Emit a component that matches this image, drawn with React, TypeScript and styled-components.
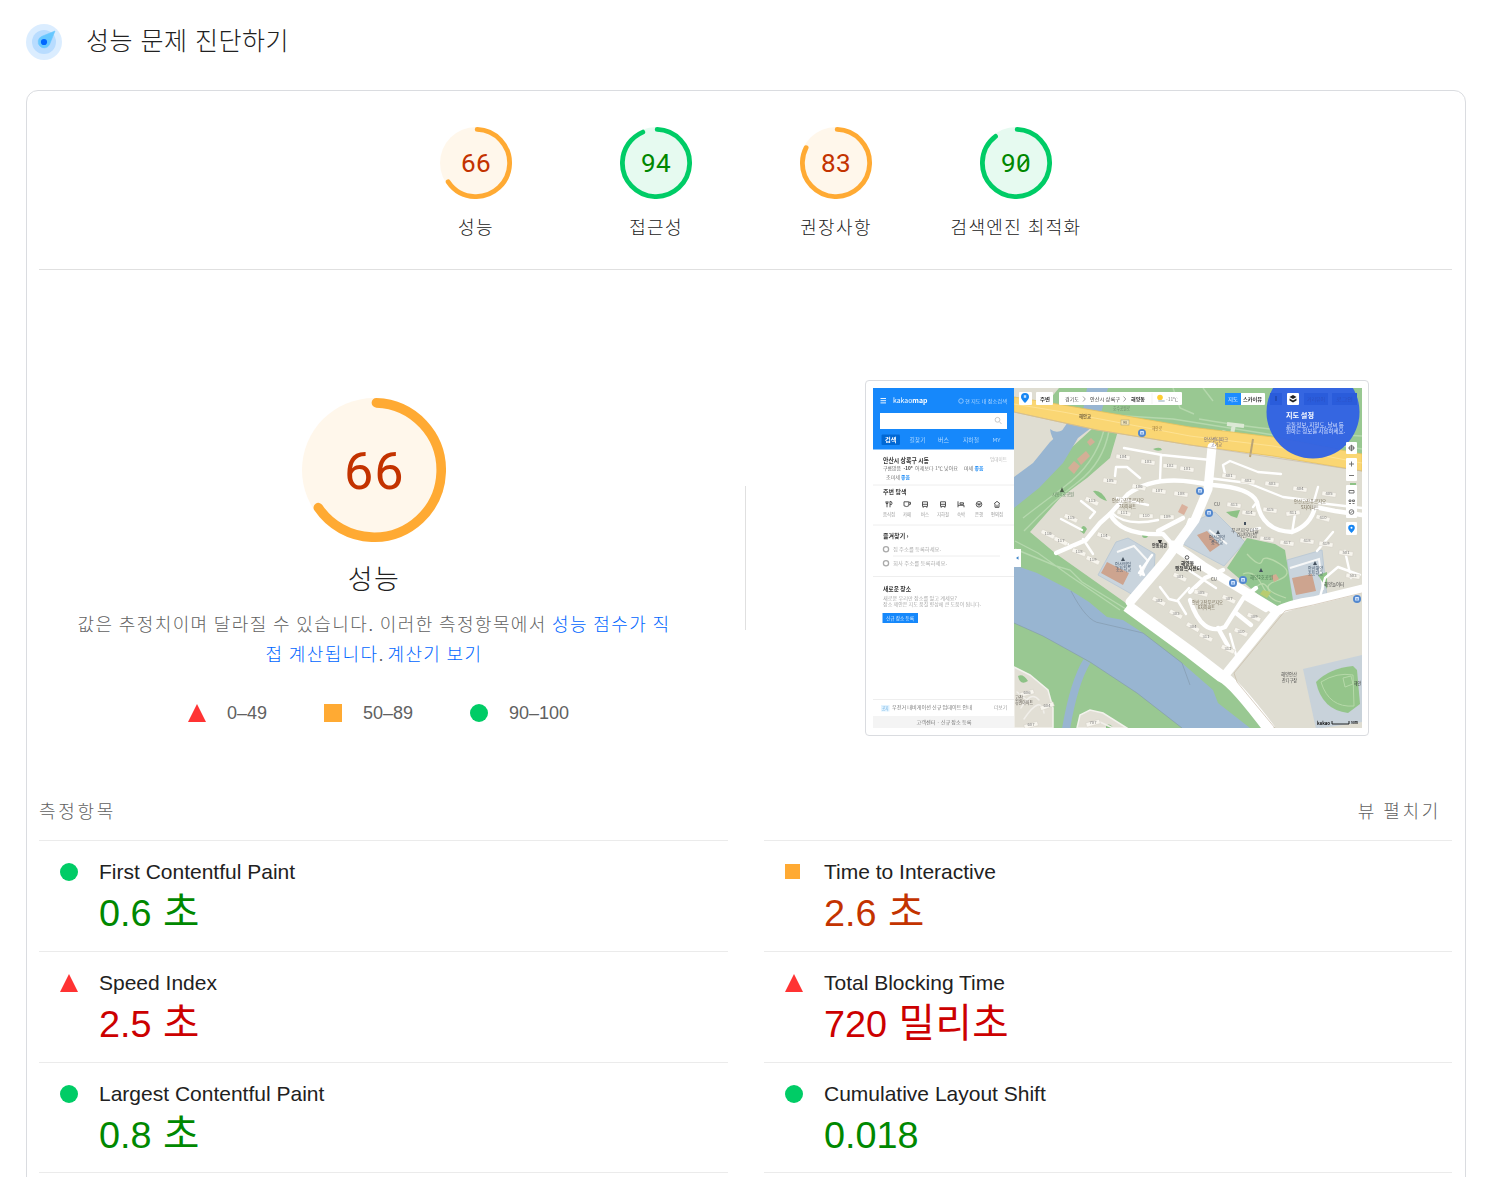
import React from "react";
import styled, { createGlobalStyle } from "styled-components";

const sans = `"Liberation Sans", "Noto Sans CJK KR", sans-serif`;

const GlobalStyle = createGlobalStyle`
  * { box-sizing: border-box; }
  html, body { margin: 0; background: #fff; }
  body { font-family: ${sans}; font-weight: 300; color: #212121; overflow: hidden; }
`;

type Level = "pass" | "average" | "fail";
const ink: Record<Level, string> = { pass: "#008800", average: "#c33300", fail: "#cc0000" };
const fillColor: Record<Level, string> = { pass: "#00cc66", average: "#ffaa33", fail: "#ff3333" };
const tint: Record<Level, string> = { pass: "#e6faf0", average: "#fff7eb", fail: "#ffebeb" };

const Page = styled.div`
  height: 1177px;
  padding: 0 21px 0 26px;
  overflow: hidden;
  display: flex;
  flex-direction: column;
`;
const Header = styled.header`
  height: 90px;
  flex: none;
  display: flex;
  align-items: flex-start;
  gap: 24px;
  padding-top: 24px;
`;
const Title = styled.h1`
  margin: 0;
  font-size: 25px;
  font-weight: 300;
  line-height: 34px;
  letter-spacing: 0.5px;
`;
const Card = styled.main`
  width: 1440px;
  height: 1200px;
  flex: none;
  border: 1px solid #dadce0;
  border-radius: 12px;
  padding: 0 13px 0 12px;
`;
const ScoreRow = styled.section`
  height: 179px;
  display: flex;
  justify-content: center;
  padding-top: 36px;
  border-bottom: 1px solid #e0e0e0;
`;
const GaugeItem = styled.div`
  width: 180px;
  display: flex;
  flex-direction: column;
  align-items: center;
`;
const GaugeFrame = styled.div<{ $size: number }>`
  width: ${(p) => p.$size}px;
  height: ${(p) => p.$size}px;
  svg { display: block; width: 100%; height: 100%; }
`;
const GaugeLabel = styled.div`
  margin-top: 16px;
  font-size: 18px;
  line-height: 26px;
  letter-spacing: 1.35px;
  word-spacing: -0.8px;
  padding-left: 1px;
  white-space: nowrap;
`;
const Overview = styled.section`
  height: 516px;
  display: grid;
  grid-template-columns: 670px 1px 670px;
  justify-content: space-between;
`;
const Summary = styled.div`
  display: flex;
  flex-direction: column;
  align-items: center;
  padding-top: 128px;
`;
const SummaryTitle = styled.h2`
  margin: 20px 0 0;
  font-size: 27px;
  font-weight: 300;
  line-height: 36px;
  letter-spacing: 1.5px;
`;
const Description = styled.p`
  margin: 12px 0 0;
  font-size: 18px;
  line-height: 30px;
  letter-spacing: 1.4px;
  word-spacing: -1.1px;
  color: #616161;
  text-align: center;
  white-space: nowrap;
`;
const Stop = styled.span`
  letter-spacing: 0;
`;
const Link = styled.a`
  color: #0066ff;
  text-decoration: none;
`;
const Legend = styled.div`
  display: flex;
  gap: 57px;
  margin: 28px 0 0 9px;
`;
const LegendItem = styled.span`
  display: flex;
  align-items: center;
  gap: 21px;
  font-size: 18px;
  line-height: 30px;
  color: #616161;
`;
const Divider = styled.div`
  height: 144px;
  margin-top: 216px;
  background: #e0e0e0;
`;
const Preview = styled.div`
  display: flex;
  justify-content: center;
  align-items: flex-start;
  padding-top: 110px;
`;
const ShotFrame = styled.div`
  width: 504px;
  height: 356px;
  border: 1px solid #dadce0;
  border-radius: 4px;
  padding: 7px;
  svg { display: block; }
`;
const MetricsHeader = styled.div`
  height: 54px;
  padding: 11px 11px 0 0;
  display: flex;
  justify-content: space-between;
  font-size: 18px;
  line-height: 30px;
  letter-spacing: 2.7px;
  word-spacing: -1.5px;
  color: #616161;
`;
const MetricsGrid = styled.section`
  display: grid;
  grid-template-columns: 689px 688px;
  justify-content: space-between;
  grid-auto-rows: 111px;
`;
const Metric = styled.article<{ $last: boolean }>`
  display: flex;
  border-top: 1px solid #ebebeb;
  border-bottom: ${(p) => (p.$last ? "1px solid #ebebeb" : "none")};
`;
const MetricIcon = styled.div`
  width: 60px;
  padding: 22px 0 0 21px;
`;
const MetricBody = styled.div`
  padding-top: 16px;
`;
const MetricName = styled.div`
  font-size: 21px;
  line-height: 30px;
`;
const MetricValue = styled.div<{ $level: Level }>`
  font-size: 37.8px;
  font-weight: 400;
  line-height: 52px;
  color: ${(p) => ink[p.$level]};
`;
const Unit = styled.span`
  font-size: 39.5px;
  line-height: 1;
  letter-spacing: 0.5px;
`;
const ShapeSvg = styled.svg`
  display: block;
  flex: none;
`;

const Shape = ({ level, small }: { level: Level; small?: boolean }) => (
  <ShapeSvg width="18" height="18" viewBox="0 0 18 18" fill={fillColor[level]}>
    {level === "fail" && <path d="M9 0 18 18H0Z" />}
    {level === "average" && (small ? <rect y="1" width="15" height="15" /> : <rect width="18" height="18" />)}
    {level === "pass" && <circle cx="9" cy="9" r="9" />}
  </ShapeSvg>
);

const Gauge = ({ score, size }: { score: number; size: number }) => {
  const level: Level = score >= 90 ? "pass" : "average";
  const around = 2 * Math.PI * 56;
  return (
    <GaugeFrame $size={size}>
      <svg viewBox="0 0 120 120">
        <circle cx="60" cy="60" r="60" fill={tint[level]} />
        <circle
          cx="60" cy="60" r="56" fill="none" stroke={fillColor[level]} strokeWidth="8" strokeLinecap="round"
          strokeDasharray={`${(score / 100) * around - 4} ${around}`} transform="rotate(-87.95 60 60)"
        />
        <text x="60.2" y="75.8" textAnchor="middle" fontFamily="Roboto, sans-serif" fontWeight="400" fontSize="43.5" letterSpacing="0.8" fill={ink[level]}>
          {score}
        </text>
        {score % 10 === 0 && <path d="M66.500 67.500 78.500 53.500" stroke={ink[level]} strokeWidth="3.2" />}
      </svg>
    </GaugeFrame>
  );
};

const Compass = () => (
  <ShapeSvg width="36" height="36" viewBox="0 0 36 36">
    <circle cx="18" cy="18" r="18" fill="#dbedff" />
    <circle cx="18" cy="18" r="12" fill="#b8dcff" />
    <path d="M29 7 15.500 12.500a6 6 0 1 0 7.900 8.300Z" fill="#66c7ff" stroke="#66c7ff" strokeWidth=".6" strokeLinejoin="round" />
    <circle cx="18" cy="18" r="3.1" fill="#0066ff" />
  </ShapeSvg>
);

interface LabelProps {
  x: number; y: number; w: number; s?: number; c?: string; b?: boolean; children: string;
}
const Label = ({ x, y, w, s = 5, c = "#777", b, children }: LabelProps) => (
  <text x={x} y={y + s * 0.36} fontSize={s} fill={c} fontWeight={b ? 700 : 400} textLength={w} lengthAdjust="spacingAndGlyphs">
    {children}
  </text>
);

const blocks: [number, number, number, string][] = [
  [250, 69, 8, "104"], [275, 74, 8, "103"], [297, 78, 5, "102"], [314, 81, 8, "101"], [237, 93, 10, "105"],
  [266, 99, 14, "106"], [286, 103, 8, "107"], [308, 106, 8, "108"], [219, 113, 25, "113"], [251, 125, 12, "111"],
  [273, 128, 0, "110"], [294, 129, 0, "109"], [198, 130, 25, "115"], [175, 146, 25, "116"], [188, 153, 25, "117"],
  [231, 148, 20, "114"], [206, 164, 20, "118"], [220, 172, 25, "119"], [356, 88, 8, "401"], [375, 93, 8, "402"],
  [399, 96, 8, "403"], [427, 101, 8, "404"], [456, 106, 8, "405"], [361, 117, 8, "413"], [376, 125, 8, "414"],
  [397, 122, 8, "415"], [420, 125, -8, "411"], [450, 130, 15, "410"], [394, 151, 8, "416"], [414, 155, 8, "417"],
  [434, 153, 8, "418"], [453, 156, 8, "419"], [307, 189, 25, "301"], [286, 213, 28, "302"], [303, 226, 28, "303"],
  [328, 205, 15, "305"], [356, 211, 25, "307"], [381, 229, 25, "309"], [368, 244, 25, "310"], [333, 249, 25, "311"],
  [355, 261, 25, "312"], [320, 239, 30, "304"], [473, 165, 8, "501"], [480, 188, 8, "503"],
  [154, 305, -15, "606"], [174, 318, -20, "604"], [158, 337, -15, "607"], [220, 335, -15, "707"],
];

const busStops: [number, number][] = [
  [269, 45], [327, 103], [336, 125], [360, 195], [370, 192], [484, 211],
];

const nearby: [number, string][] = [
  [16, "음식점"], [34, "카페"], [52, "버스"], [70, "지하철"], [88, "숙박"], [106, "은행"], [124, "편의점"],
];

const NearbyIcon = ({ kind, x }: { kind: number; x: number }) => (
  <g transform={`translate(${x - 3} 113.3)`} fill="none" stroke="#444" strokeWidth=".9">
    {kind === 0 && <path d="M0 0v2q1 1 2 0V0M1 0v6M4 6V0q2 0 2 2t-2 1" />}
    {kind === 1 && <path d="M0 .5h4.800v4q-2 1.500-4.800 0ZM5 1h1.500v2H5" />}
    {(kind === 2 || kind === 3) && <path d="M.5.5h5v4.600h-5ZM.5 3h5M1.200 5.500v1M4.800 5.500v1" />}
    {kind === 4 && <path d="M0 0v6M0 4h6v2M2 3h3.500V1.500H2Z" />}
    {kind === 5 && <><circle cx="3" cy="3" r="2.8" /><path d="m1.300 2 1 2 .7-2 .7 2 1-2" /></>}
    {kind === 6 && <path d="M0 2.500 3 0l3 2.500M1 2.500V6h4V2.500M3 3.500V6" />}
  </g>
);

const MapArea = () => (
  <g>
    <rect x="141" width="348" height="340" fill="#dfddd2" />
    <path d="M168 14 185 0H489V72L317 42Z" fill="#99c892" />
    <path d="M141 0H186L172 17 141 12Z" fill="#dfddd2" />
    <path d="M209 28 214 0H235L226 32Z" fill="#98b5d1" />
    <path d="M247 36 237 70 214 90 187 110 157 144 182 165 250 213 317 266 360 296 397 340H141V98L198 60 220 40Z" fill="#99c892" />
    <path d="M197 31 223 36 205 50 190 75 166 100 141 120V89L160 75 177 54 188 44Z" fill="#98b5d1" />
    <path d="M177 41q6 5 13 1l-7 13q-5-6-6-14Z" fill="#98b5d1" />
    <path d="M141 177 164 185 197 202 216 214 234 229 250 232 270 245 309 275 340 302 345 315 377 340H309L264 305 217 274 170 248 141 235Z" fill="#98b5d1" />
    <path d="M214 273Q201 294 193 341" fill="none" stroke="#98b5d1" strokeWidth="8" />
    <path d="M141 235 170 248 217 274 264 305 309 340M198 203Q214 234 227 235L270 245 309 275 317 297" fill="none" stroke="#8297aa" strokeWidth=".6" />
    <path d="M141 279 157 287 175 302 180 320V340H141ZM204 340 207 327 217 322 230 325 254 340Z" fill="#e2dfd5" stroke="#f3f2ed" strokeWidth="1.5" />
    <g fill="none" stroke="#b5d8ad" strokeWidth="1.4">
      <path d="M236 43Q230 75 205 94T151 143M231 42Q222 76 191 99T150 130M142 161 183 178 197 182 209 194 253 221M142 153 165 165 197 188 247 222" />
      <path d="M237 27 300 31 489 61M300 0 307 20 321 26M330 0 340 13M326 31Q401 44 489 48" />
      <path d="M354 36 371 38M361 36 359 46M349 44 365 48" strokeWidth="4" stroke="#dce9d5" />
    </g>
    <path d="M141 9 190 17 317 39 400 49 489 66V83L400 68 317 57 224 42 141 24Z" fill="#fad673" stroke="#e9c15b" strokeWidth=".8" />
    <path d="M141 16 190 24 317 48 400 58 489 75" fill="none" stroke="#ffe6a0" strokeWidth=".7" />
    <path d="M380 51 377 69" stroke="#b9a477" strokeWidth="2" />

    <g fill="#d9ac97" opacity=".9">
      <path d="m204 71 9-8 4 5-9 9ZM214 54l4-4 4 4-5 4ZM195 80l6-7 6 5-6 8ZM305 124l4-8 6 3-4 8Z" />
    </g>
    <path d="M243 154 255 150 282 166 281 184 262 208 225 187ZM320 134 342 124 372 154 351 178 310 156ZM414 172 449 162 454 209 420 216Z" fill="#c9d4dd" stroke="#bccad5" strokeWidth="1" />
    <path d="m234 174 22 11-6 12-22-12ZM324 147l10-4 13 14-10 7ZM419 190l20-4 4 17-20 4Z" fill="#cda48f" />
    <path d="m244 164 17-6 14 15-8 15M336 142l18 14M417 180l29-9 4 31" fill="none" stroke="#f7f8f8" strokeWidth="2" />
    <path d="M354 180 374 150 402 156 412 162 421 219 404 223Z" fill="#94c690" />
    <path d="M374 166Q387 180 389 173T407 176 403 193 413 210M370 186Q381 181 389 197T408 214M381 202q10-14 16 3" fill="none" stroke="#b8d9ab" strokeWidth="1.3" />
    <path d="m398 188 5-2 3 5-5 3Z" fill="#d3ad93" />
    <path d="m390 202 8 2-4 6-7-4Z" fill="#b8cc70" />
    <g fill="#8dc286">
      <path d="M220 103q8-2 14 10-8-2-14-10ZM280 61q8-3 9 1-5 2-9-1ZM207 143q3-9 7-2l-3 5ZM269 147a3 3 0 1 0 6 0 3 3 0 1 0-6 0M353 124l14-2-3 8-6-2ZM145 288q5-3 10 5-8 5-10-5ZM233 337q5-2 7 3h-7ZM477 95h6v4h-6ZM445 187l9-3v17Z" />
    </g>

    <g fill="none" stroke="#fff" strokeLinecap="round" strokeLinejoin="round">
      <path d="M339 59 335 101 322 132 292 173 257 214" strokeWidth="9" />
      <path d="M254 218 317 264 348 288Q360 293 397 342" strokeWidth="12" strokeLinecap="butt" />
      <path d="M300 157 330 178 404 223Q418 216 440 213L489 201M404 223 352 287" strokeWidth="9" />
      <g strokeWidth="4.4">
        <path d="M183 165 213 152 227 135 237 126 255 106Q280 88 320 94L340 97Q378 100 384 114 389 143 419 144 438 137 442 119L462 123 489 127" />
        <path d="M237 126Q248 148 290 146L305 163M285 143 310 130M317 132 308 157" />
        <path d="M317 204 332 190 350 182M317 212Q329 249 352 239L371 209 383 200M371 209 393 222M345 240 355 258M363 225 378 237" />
      </g>
      <g strokeWidth="2.4">
        <path d="M251 60 289 67 338 72M288 67 287 92M242 88 243 79 254 79 267 90M208 113 222 124 217 130M188 131 209 142M169 144 195 156M210 151 220 166M244 110 275 117M238 124Q252 139 285 132" />
        <path d="M352 86 350 77 357 73 385 84 408 86M335 90 375 95 410 109 441 113 445 99M446 115 489 120M380 119 384 114M419 145 422 126M387 140 378 142M472 163 478 190M444 163 460 144M447 209 452 190 465 179 487 187" />
        <path d="M287 199 296 211 304 213M304 213 316 200M305 213 313 226M267 178 271 187 266 185 279 167M317 183 343 200M357 246 363 267" />
      </g>
      <path d="M148 320q10-18 18-8M151 331q17-25 20-6M144 304l12 10M214 338l13-4 13 6" stroke="#f1efea" strokeWidth="1.5" />
    </g>
    <path d="M489 205 440 217 412 223 361 285 364 294 402 340M141 24 224 42 317 57 489 83" fill="none" stroke="#c9bca9" strokeWidth=".7" />

    <path d="M430 281 489 267V334L443 341Z" fill="#c8d2da" />
    <path d="M443 294Q457 280 480 278L484 282 487 316 475 325Q449 322 443 294Z" fill="#94c58a" />
    <path d="M448 294Q464 284 480 287L481 318Q456 320 448 294ZM470 290l8-2 2 8-8 3Z" fill="none" stroke="#b6d9a9" strokeWidth="1" />

    {blocks.map(([x, y, turn, name], i) => (
      <g key={i} transform={`translate(${x} ${y}) rotate(${turn})`}>
        <rect x="-7" y="-2" width="14" height="4.4" fill="#f7f5ee" stroke="#cfcbc0" strokeWidth=".4" />
        <text x="0" y="1.2" fontSize="4.2" textAnchor="middle" fill="#777" transform={`rotate(${-turn})`}>{name}</text>
      </g>
    ))}

    <Label x={206} y={28} w={12} s={4.5} c="#74623c" b>해안교</Label>
    <rect x="248" y="32" width="8" height="5" fill="#f4e6b5" stroke="#a7a389" strokeWidth=".6" />
    <Label x={250} y={34.7} w={4} s={4} c="#555">98</Label>
    <Label x={279} y={40.5} w={10} s={4.5} c="#9c7a3c">해안로</Label>
    <Label x={240} y={20} w={17} s={4.5} c="#6a8668">호수공원로</Label>
    <path d="m189 99-2 5h4Z" fill="#4d5e4c" />
    <Label x={179} y={106} w={22} s={5} c="#668365">시동1호공원</Label>
    <Label x={239} y={112} w={32} s={5} c="#756b56">안산고잔푸르지오</Label>
    <Label x={246} y={118} w={17} s={5} c="#756b56">7차아파트</Label>
    <Label x={331} y={51} w={24} s={4.8} c="#635c7e">안산센터파크</Label>
    <Label x={338} y={56} w={11} s={4.8} c="#635c7e">고가교</Label>
    <Label x={279} y={157} w={15} s={5} c="#333" b>안동회관</Label>
    <path d="M285 152h4l-1 3h-2Z" fill="#333" />
    <Label x={341} y={116} w={6} s={5} c="#555">CU</Label>
    <Label x={358} y={142} w={28} s={5} c="#555">푸르지오마을</Label>
    <Label x={364} y={147} w={20} s={5} c="#555">어린이집</Label>
    <Label x={336} y={149} w={16} s={5} c="#3e5166">안산해양</Label>
    <Label x={338} y={154} w={12} s={5} c="#3e5166">중학교</Label>
    <Label x={421} y={113} w={32} s={5} c="#756b56">안산고잔푸르지오</Label>
    <Label x={428} y={119} w={18} s={5} c="#756b56">5차아파트</Label>
    <path d="m250 169-2 4h4ZM345 142l-2 4h4ZM442 173l-2 4h4ZM371 134h2v3h-2ZM388 180l-2 4h4Z" fill="#44515e" />
    <Label x={242} y={176} w={16} s={5} c="#3e5166">안산원일</Label>
    <Label x={243} y={181} w={15} s={5} c="#3e5166">초등학교</Label>
    <circle cx="314" cy="169.5" r="1.8" fill="#fff" stroke="#333" strokeWidth=".8" />
    <Label x={308} y={175} w={13} s={5} c="#333" b>해양동</Label>
    <Label x={302} y={180} w={26} s={5} c="#333" b>행정복지센터</Label>
    <Label x={338} y={191} w={6} s={5} c="#555">CU</Label>
    <Label x={377} y={189} w={23} s={5} c="#507b56">해양2호공원</Label>
    <Label x={435} y={180} w={15} s={5} c="#3e5166">안산해양</Label>
    <Label x={435} y={185} w={15} s={5} c="#3e5166">초등학교</Label>
    <Label x={451} y={196} w={20} s={5} c="#444">해양놀이터</Label>
    <Label x={319} y={214} w={31} s={5} c="#756b56">안산고잔푸르지오</Label>
    <Label x={325} y={219} w={17} s={5} c="#756b56">6차아파트</Label>
    <Label x={408} y={286.5} w={16} s={5} c="#444">해양안산</Label>
    <Label x={409} y={292} w={15} s={5} c="#444">잔디구장</Label>
    <Label x={481} y={295} w={7} s={4.5} c="#333">해안</Label>
    <Label x={142} y={309} w={8} s={4.5} c="#55504a">고잔</Label>
    <Label x={142} y={314} w={18} s={4.5} c="#55504a">휴먼아파트</Label>
    <Label x={444} y={335} w={13} s={5} c="#111" b>kakao</Label>
    <path d="M459 333v3h17v-3" fill="none" stroke="#111" strokeWidth=".9" />
    <Label x={478} y={335} w={7} s={4} c="#111" b>50m</Label>

    {busStops.map(([x, y], i) => (
      <g key={i}>
        <circle cx={x} cy={y} r="4" fill="#5288cf" />
        <rect x={x - 2} y={y - 2} width="4" height="3.6" rx=".7" fill="#d9e9ff" />
        <path d={`M${x - 1.3} ${y}h2.6`} stroke="#5288cf" strokeWidth="1" />
      </g>
    ))}
  </g>
);

const MapControls = () => (
  <g>
    <g fill="#fff">
      <rect x="146" y="4" width="13" height="13" rx="1" />
      <rect x="163" y="4" width="17" height="13" rx="1" />
      <rect x="186" y="4" width="123" height="13" rx="1" />
      <rect x="352" y="5" width="40" height="12" rx="1" />
    </g>
    <path d="M152 15q-4-4-4-6a4 4 0 0 1 8 0q0 2-4 6Z" fill="#1686f3" />
    <rect x="150.8" y="7.2" width="2.4" height="2.6" fill="#c5e1ff" />
    <Label x={167} y={10.7} w={10} c="#333" b>주변</Label>
    <Label x={192} y={10.7} w={14} c="#444">경기도</Label>
    <Label x={217} y={10.7} w={30} c="#333">안산시 상록구</Label>
    <Label x={258} y={10.7} w={14} c="#333" b>해양동</Label>
    <path d="m210 8.500 2.300 2.500-2.300 2.500M250.500 8.500l2.300 2.500-2.300 2.500" fill="none" stroke="#888" strokeWidth=".8" />
    <path d="M279 5v11" stroke="#eee" strokeWidth=".7" />
    <circle cx="287" cy="9.5" r="2.8" fill="#ffcd32" />
    <path d="M286 13h5" stroke="#c6d3dc" strokeWidth="1.8" strokeLinecap="round" />
    <Label x={293} y={11} w={12} s={4.6} c="#777">-11℃</Label>
    <rect x="352" y="5" width="16" height="12" fill="#1c8cff" />
    <Label x={355} y={11} w={10} c="#fff">지도</Label>
    <Label x={370} y={11} w={19} c="#333" b>스카이뷰</Label>
    <circle cx="440" cy="24" r="46.5" fill="#3262e3" fillOpacity=".97" />
    <g fill="#2c5cdb">
      <rect x="397" y="5" width="12" height="12" /><rect x="431" y="5" width="24" height="12" /><rect x="459" y="5" width="25" height="12" />
    </g>
    <path d="M402 13V8h2v5Z" fill="#234bb8" />
    <Label x={434} y={11} w={18} c="#2850c0">거리뷰어</Label>
    <Label x={463} y={11} w={17} c="#2850c0">로그인</Label>
    <rect x="414" y="5" width="12" height="12" rx="1" fill="#fff" />
    <path d="m420 7 3.500 2-3.500 2-3.500-2ZM416.500 10.500l3.500 2 3.500-2v2L420 14.500l-3.500-2Z" fill="#222" />
    <Label x={413} y={27.5} w={28} s={6.6} c="#fff" b>지도 설정</Label>
    <Label x={413} y={37} w={58} s={5.3} c="#dce6ff">교통정보, 지형도, 날씨 등</Label>
    <Label x={413} y={43.3} w={59} s={5.3} c="#dce6ff">원하는 정보를 사용하세요.</Label>
    <g fill="#fff">
      <rect x="473" y="54" width="11" height="12" rx="1" /><rect x="473" y="70" width="11" height="23" rx="1" />
      <rect x="473" y="97" width="11" height="33" rx="1" /><rect x="473" y="134" width="11" height="13" rx="1" />
    </g>
    <g fill="none" stroke="#666" strokeWidth=".9">
      <circle cx="478.5" cy="60" r="2.3" /><path d="M475.300 60h6.400M478.500 56.800v6.400M476 76h5M478.500 73.500v5M476 87.500h5" />
      <path d="M476 102.500h5v2.500h-5ZM476 112h2v1.500h-2ZM479.500 112h2v1.500h-2ZM476 115.500h2M479.500 115.500h2" />
      <circle cx="478.5" cy="124" r="2.3" /><path d="m477.500 125 2-2" />
    </g>
    <path d="M478.500 145q-3.300-3.200-3.300-5a3.300 3.300 0 0 1 6.600 0q0 1.800-3.300 5Z" fill="#1686f3" />
    <circle cx="478.5" cy="139.8" r="1" fill="#fff" />
    <rect x="140" y="161" width="8" height="18" fill="#fff" />
    <path d="m145.500 168.200-2.500 1.800 2.500 1.800Z" fill="#3b83c9" />
  </g>
);

const MapSidebar = () => (
  <g>
    <rect width="141" height="340" fill="#fff" />
    <rect width="141" height="61.5" fill="#1688fb" />
    <path d="M7.500 10.500h5.500M7.500 12.700h5.500M7.500 14.900h5.500" stroke="#fff" strokeWidth=".9" />
    <text x="20" y="15" fontSize="7" fontWeight="400" fill="#fff" textLength="34.5" lengthAdjust="spacingAndGlyphs">kakao<tspan fontWeight="700">map</tspan></text>
    <circle cx="88" cy="13" r="2.3" fill="none" stroke="#b6dbff" strokeWidth=".7" />
    <Label x={92} y={13} w={42} c="#b9dcff">현 지도 내 장소검색</Label>
    <rect x="7" y="25" width="127" height="16" fill="#fff" />
    <circle cx="124.5" cy="31.8" r="2.4" fill="none" stroke="#bbb" strokeWidth=".8" /><path d="m126.500 33.800 2 2.200" stroke="#bbb" strokeWidth=".8" />
    <rect x="8.5" y="46.5" width="18.5" height="10.5" rx="1" fill="#0668d4" />
    <Label x={12} y={51.8} w={11.5} s={5.5} c="#fff" b>검색</Label>
    <Label x={36.5} y={51.8} w={16} s={5.5} c="#b4daff">길찾기</Label>
    <Label x={65} y={51.8} w={11} s={5.5} c="#b4daff">버스</Label>
    <Label x={90} y={51.8} w={16} s={5.5} c="#b4daff">지하철</Label>
    <Label x={119.5} y={51.8} w={8} c="#b4daff">MY</Label>
    <Label x={10} y={72.8} w={46} s={6.3} c="#333" b>안산시 상록구 시동</Label>
    <Label x={117} y={71.5} w={17} s={4.5} c="#bbb">업데이트</Label>
    <Label x={10} y={80.5} w={18} c="#666">구름많음</Label>
    <Label x={30.5} y={80.5} w={9} c="#333" b>-10°</Label>
    <Label x={42} y={80.5} w={43} c="#777">어제보다 1℃ 낮아요</Label>
    <Label x={91} y={80.5} w={9} c="#666">미세</Label>
    <Label x={101.5} y={80.5} w={9} c="#1688f6" b>좋음</Label>
    <Label x={13} y={89} w={14} c="#777">초미세</Label>
    <Label x={28} y={89} w={9} c="#1688f6" b>좋음</Label>
    <path d="M0 97h141M0 137h141M20 168h107M0 188.500h141M0 311.500h141" stroke="#eee" strokeWidth="1" />
    <Label x={10} y={104} w={23.5} s={6} c="#444" b>주변 탐색</Label>
    {nearby.map(([x, name], i) => (
      <g key={name}>
        <NearbyIcon kind={i} x={x} />
        <Label x={x - name.length * 2} y={126} w={name.length * 4} s={4.3} c="#999">{name}</Label>
      </g>
    ))}
    <Label x={10} y={148.3} w={25.5} s={6} c="#333" b>즐겨찾기 ›</Label>
    <circle cx="13" cy="161.3" r="2.6" fill="none" stroke="#aaa" strokeWidth="1.3" />
    <Label x={20} y={161.5} w={48} c="#aaa">집 주소를 등록하세요.</Label>
    <circle cx="13" cy="175.3" r="2.6" fill="none" stroke="#aaa" strokeWidth="1.3" />
    <Label x={20} y={175.5} w={54} c="#aaa">회사 주소를 등록하세요.</Label>
    <Label x={10} y={200.8} w={28} s={6} c="#333" b>새로운 장소</Label>
    <Label x={10} y={209.8} w={74} c="#aaa">새로운 우리만 장소를 알고 계세요?</Label>
    <Label x={10} y={216.5} w={98} c="#aaa">장소 제안은 지도 품질 향상에 큰 도움이 됩니다.</Label>
    <rect x="9.5" y="225" width="35.5" height="10" fill="#1688fb" />
    <Label x={13} y={230} w={28} c="#dceeff">신규 장소 등록</Label>
    <rect x="8" y="317" width="8.5" height="6.5" fill="#e2f3ff" />
    <Label x={9} y={320.3} w={6.5} s={4.5} c="#64abdf">공지</Label>
    <Label x={19} y={319.6} w={80} c="#777">우전거 내비게이션 신규 업데이트 안내</Label>
    <Label x={121} y={319.6} w={13} s={4.5} c="#999">더보기</Label>
    <rect y="328" width="141" height="12" fill="#f4f4f4" />
    <Label x={43.5} y={334.5} w={55} c="#777">고객센터 · 신규 장소 등록</Label>
  </g>
);

const MapScreenshot = () => (
  <svg width="489" height="340" viewBox="0 0 489 340" fontFamily={`"Noto Sans CJK KR", sans-serif`} fontWeight="400">
    <defs>
      <filter id="soft" x="0" y="0" width="100%" height="100%">
        <feGaussianBlur stdDeviation=".48" />
      </filter>
      <clipPath id="edge"><rect width="489" height="340" /></clipPath>
    </defs>
    <g clipPath="url(#edge)">
      <g filter="url(#soft)">
        <MapArea />
        <MapControls />
        <MapSidebar />
      </g>
    </g>
  </svg>
);

const categories = [
  { name: "성능", score: 66 },
  { name: "접근성", score: 94 },
  { name: "권장사항", score: 83 },
  { name: "검색엔진 최적화", score: 90 },
];

const metrics: { name: string; value: string; unit?: string; level: Level }[] = [
  { name: "First Contentful Paint", value: "0.6", unit: "초", level: "pass" },
  { name: "Time to Interactive", value: "2.6", unit: "초", level: "average" },
  { name: "Speed Index", value: "2.5", unit: "초", level: "fail" },
  { name: "Total Blocking Time", value: "720", unit: "밀리초", level: "fail" },
  { name: "Largest Contentful Paint", value: "0.8", unit: "초", level: "pass" },
  { name: "Cumulative Layout Shift", value: "0.018", level: "pass" },
];

export default function App() {
  return (
    <Page>
      <GlobalStyle />
      <Header>
        <Compass />
        <Title>성능 문제 진단하기</Title>
      </Header>
      <Card>
        <ScoreRow>
          {categories.map((c) => (
            <GaugeItem key={c.name}>
              <Gauge score={c.score} size={72} />
              <GaugeLabel>{c.name}</GaugeLabel>
            </GaugeItem>
          ))}
        </ScoreRow>
        <Overview>
          <Summary>
            <Gauge score={66} size={144} />
            <SummaryTitle>성능</SummaryTitle>
            <Description>
              값은 추정치이며 달라질 수 있습니다. 이러한 측정항목에서 <Link>성능 점수가 직<br />접 계산됩니다</Link><Stop>. </Stop><Link>계산기 보기</Link>
            </Description>
            <Legend>
              <LegendItem><Shape level="fail" />0–49</LegendItem>
              <LegendItem><Shape level="average" />50–89</LegendItem>
              <LegendItem><Shape level="pass" />90–100</LegendItem>
            </Legend>
          </Summary>
          <Divider />
          <Preview>
            <ShotFrame><MapScreenshot /></ShotFrame>
          </Preview>
        </Overview>
        <MetricsHeader>
          <span>측정항목</span>
          <span>뷰 펼치기</span>
        </MetricsHeader>
        <MetricsGrid>
          {metrics.map((m, i) => (
            <Metric key={m.name} $last={i >= 4}>
              <MetricIcon><Shape level={m.level} small /></MetricIcon>
              <MetricBody>
                <MetricName>{m.name}</MetricName>
                <MetricValue $level={m.level}>
                  {m.value}{m.unit && <Unit> {m.unit}</Unit>}
                </MetricValue>
              </MetricBody>
            </Metric>
          ))}
        </MetricsGrid>
      </Card>
    </Page>
  );
}
